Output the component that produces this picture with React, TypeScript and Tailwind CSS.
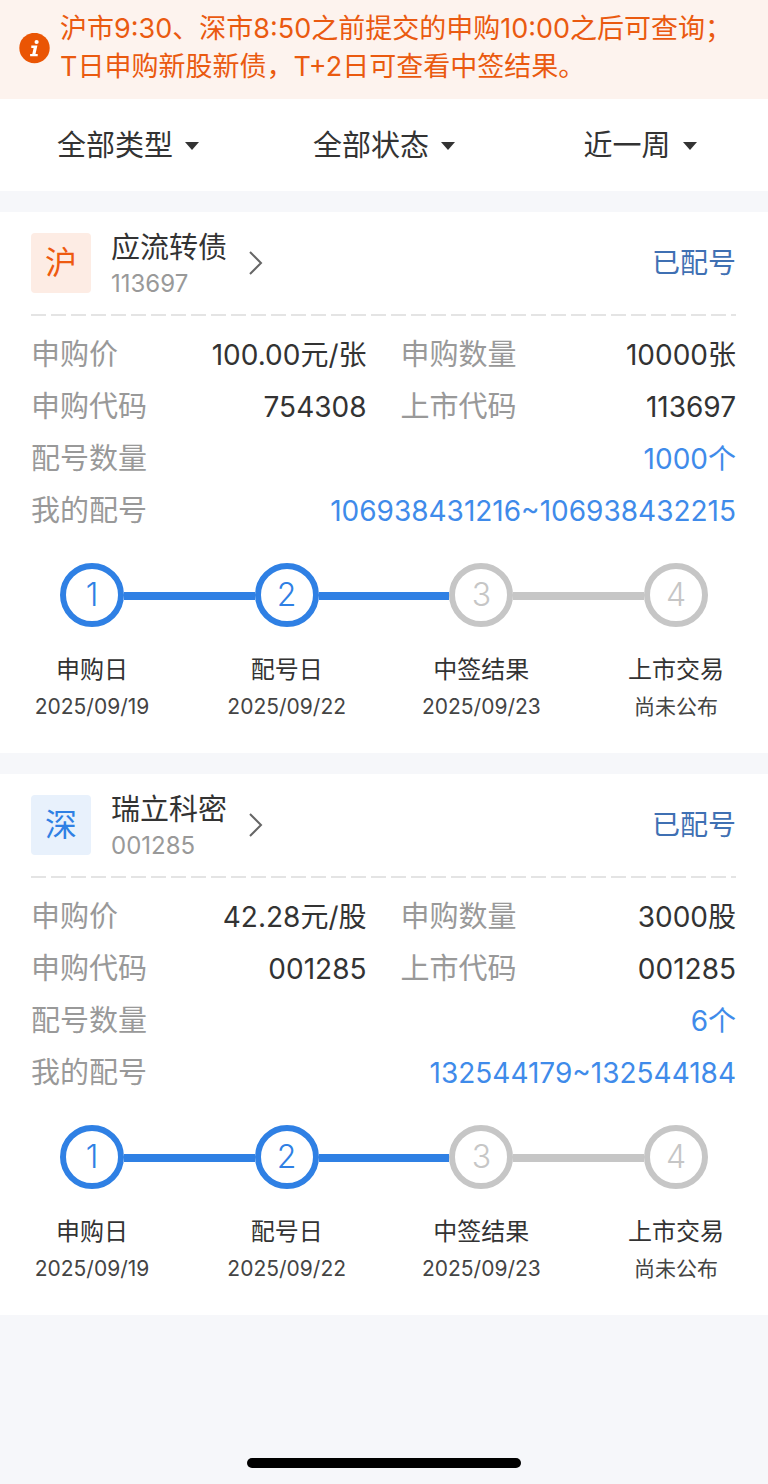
import { useState } from 'react';
import clsx from 'clsx';

type Step = { title: string; note: string; done: boolean };

type Subscription = {
  market: '沪' | '深';
  name: string;
  code: string;
  status: string;
  price: string;
  amount: string;
  applyCode: string;
  listCode: string;
  allotCount: string;
  allotRange: string;
  steps: Step[];
};

const steps: Step[] = [
  { title: '申购日', note: '2025/09/19', done: true },
  { title: '配号日', note: '2025/09/22', done: true },
  { title: '中签结果', note: '2025/09/23', done: false },
  { title: '上市交易', note: '尚未公布', done: false },
];

const subscriptions: Subscription[] = [
  {
    market: '沪',
    name: '应流转债',
    code: '113697',
    status: '已配号',
    price: '100.00元/张',
    amount: '10000张',
    applyCode: '754308',
    listCode: '113697',
    allotCount: '1000个',
    allotRange: '106938431216~106938432215',
    steps,
  },
  {
    market: '深',
    name: '瑞立科密',
    code: '001285',
    status: '已配号',
    price: '42.28元/股',
    amount: '3000股',
    applyCode: '001285',
    listCode: '001285',
    allotCount: '6个',
    allotRange: '132544179~132544184',
    steps,
  },
];

const filters = [
  { id: 'type', label: '类型', options: ['全部类型', '新股', '新债'] },
  { id: 'state', label: '状态', options: ['全部状态', '已申购', '已配号', '已中签'] },
  { id: 'range', label: '时间', options: ['近一周', '近一月', '近一年'] },
];

export default function App() {
  return (
    <main className="flex min-h-screen flex-col bg-[#f6f7fa] font-['Inter','Noto_Sans_CJK_SC',sans-serif] text-[#333]">
      <Notice />
      <div className="grid h-[92px] grid-cols-3 bg-white pt-[2px]">
        {filters.map((filter) => (
          <Filter key={filter.id} {...filter} />
        ))}
      </div>
      <div className="mt-[21px] flex flex-col gap-[21px]">
        {subscriptions.map((item) => (
          <Card key={item.code} item={item} />
        ))}
      </div>
      <div className="mx-auto mt-auto mb-4 h-[10px] w-[274px] rounded-full bg-black" />
    </main>
  );
}

function Notice() {
  return (
    <div className="flex items-center gap-[10px] bg-[#fdf3ee] pt-[10px] pr-4 pb-[13px] pl-[19px] text-[#ea5a10]">
      <svg viewBox="0 0 31 31" className="size-[31px] shrink-0" aria-hidden="true">
        <circle cx="15.5" cy="15" r="15.2" fill="#ea5504" />
        <circle cx="17.6" cy="9" r="2.1" fill="#fff" />
        <path d="M12.3 12.6h6.1l-1.9 8.4h2.2v2.3h-7.6V21h2.2l1.3-6.1h-2.3z" fill="#fff" />
      </svg>
      <p className="text-[27px] leading-[38px]">
        沪市9:30、深市8:50之前提交的申购10:00之后可查询；
        <br />
        T日申购新股新债，T+2日可查看中签结果。
      </p>
    </div>
  );
}

function Filter({ id, label, options }: { id: string; label: string; options: string[] }) {
  const [value, setValue] = useState(options[0]);

  return (
    <label htmlFor={id} className="flex items-center justify-center gap-3">
      <select
        id={id}
        aria-label={label}
        value={value}
        onChange={(event) => setValue(event.target.value)}
        className="appearance-none bg-transparent text-[29px] leading-10 [field-sizing:content]"
      >
        {options.map((option) => (
          <option key={option}>{option}</option>
        ))}
      </select>
      <svg viewBox="0 0 14 8" className="h-2 w-[14px]" aria-hidden="true">
        <path d="M0 0h14L7 8z" fill="#333" />
      </svg>
    </label>
  );
}

function Card({ item }: { item: Subscription }) {
  return (
    <section className="bg-white pt-[21px] pb-[30px]">
      <div className="pr-8 pl-[31px]">
        <header className="flex h-[60px] items-center justify-between">
          <a href="#detail" className="flex h-[60px] items-start">
            <span
              className={clsx(
                'flex size-[60px] items-center justify-center rounded-[4px] text-[32px] leading-none',
                item.market === '沪' ? 'bg-[#fdece4] text-[#ee5a10]' : 'bg-[#e8f1fc] text-[#2f80e4]',
              )}
            >
              {item.market}
            </span>
            <span className="ml-5 flex flex-col gap-[6px]">
              <span className="text-[29px] leading-[30px]">{item.name}</span>
              <span className="text-[24px] leading-[30px] text-[#999]">{item.code}</span>
            </span>
            <svg viewBox="0 0 14 24" className="ml-[22px] h-6 w-[14px] self-center" fill="none" stroke="#666" strokeWidth="2" aria-hidden="true">
              <path d="M1 1l11 11L1 23" />
            </svg>
          </a>
          <span className="text-[28px] text-[#3f70b3]">{item.status}</span>
        </header>

        <div className="mt-[21px] h-0.5 bg-[repeating-linear-gradient(90deg,#e4e4e4_0_15px,transparent_15px_20px)]" />

        <dl className="mt-[13px] grid grid-cols-2 gap-x-[34px]">
          <Field label="申购价" value={item.price} />
          <Field label="申购数量" value={item.amount} />
          <Field label="申购代码" value={item.applyCode} />
          <Field label="上市代码" value={item.listCode} />
          <Field label="配号数量" value={item.allotCount} wide />
          <Field label="我的配号" value={item.allotRange} wide />
        </dl>
      </div>

      <ol className="mt-[26px] flex px-[60px]">
        {item.steps.map((step, index) => (
          <StepItem key={step.title} step={step} number={index + 1} previous={item.steps[index - 1]} />
        ))}
      </ol>
    </section>
  );
}

function Field({ label, value, wide }: { label: string; value: string; wide?: boolean }) {
  return (
    <div className={clsx('flex h-[52px] items-center justify-between', wide && 'col-span-2')}>
      <dt className="text-[29px] text-[#999]">{label}</dt>
      <dd className={clsx('text-[28px]', wide && 'text-[#3f8bea]')}>
        {wide ? <a href="#numbers">{value}</a> : value}
      </dd>
    </div>
  );
}

function StepItem({ step, number, previous }: { step: Step; number: number; previous?: Step }) {
  return (
    <>
      {previous ? (
        <li aria-hidden="true" className={clsx('mt-[29px] h-2 flex-1', previous.done ? 'bg-[#2f80e4]' : 'bg-[#c6c6c6]')} />
      ) : null}
      <li className="flex w-16 flex-col items-center whitespace-nowrap">
        <span
          className={clsx(
            'flex size-16 items-center justify-center rounded-full border-[6px] text-[32px] font-light',
            step.done ? 'border-[#2f80e4] text-[#2f80e4]' : 'border-[#c6c6c6] text-[#c6c6c6]',
          )}
        >
          {number}
        </span>
        <span className="mt-[25px] text-[24px] leading-9">{step.title}</span>
        <span className="mt-[3px] text-[21px] leading-8 text-[#444]">{step.note}</span>
      </li>
    </>
  );
}
